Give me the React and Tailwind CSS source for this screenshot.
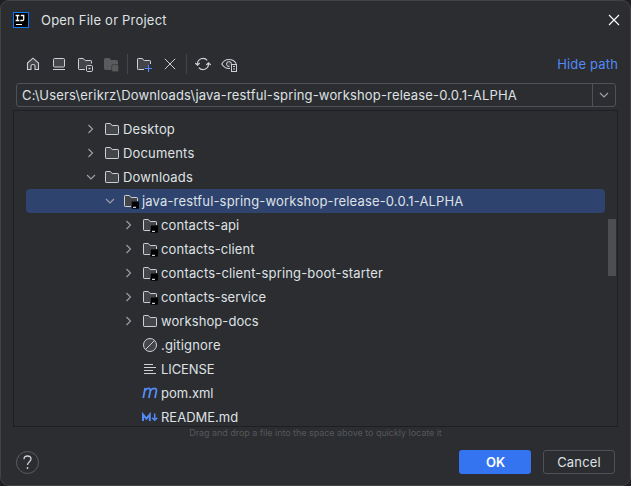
import React from "react";

const FOLDER = "M1.5 3.2Q1.5 2.5 2.2 2.5H6.1L8.3 4.5H13.8Q14.5 4.5 14.5 5.2V12.8Q14.5 13.5 13.8 13.5H2.2Q1.5 13.5 1.5 12.8Z";

function Svg({ children, className = "" }) {
  return (
    <svg width="16" height="16" viewBox="0 0 16 16" fill="none" stroke="#ced0d6" className={"block shrink-0 " + className}>
      {children}
    </svg>
  );
}

const Folder = () => (
  <Svg>
    <path d={FOLDER} fill="#43454a" />
  </Svg>
);

const ModuleFolder = () => (
  <Svg className="overflow-visible">
    <path d="M8 13.5H2.2Q1.5 13.5 1.5 12.8V3.2Q1.5 2.5 2.2 2.5H6.1L8.3 4.5H13.8Q14.5 4.5 14.5 5.2V8" fill="#43454a" />
    <path d="M8 8H14V13H8Z" fill="#43454a" stroke="none" />
    <rect x="8.8" y="8.6" width="7.2" height="7.2" rx="0.8" fill="#000" stroke="none" />
    <path d="M10 14.3H13" stroke="#fff" />
  </Svg>
);

const Ignored = () => (
  <Svg>
    <circle cx="8" cy="8" r="6.5" fill="#43454a" />
    <path d="M3.5 12.5L12.5 3.5" />
  </Svg>
);

const TextFile = () => (
  <Svg>
    <path d="M2 3.5H11M2 6.5H14M2 9.5H11M2 12.5H14" />
  </Svg>
);

const Maven = () => (
  <Svg className="overflow-visible">
    <path
      d="M1.2 13L3.2 3M2.7 6C3.8 4 5.2 3.4 6.4 3.4C8 3.4 8.6 4.5 8.3 6L6.9 13M8.3 6C9.5 4 10.8 3.4 12.2 3.4C14 3.4 14.7 4.5 14.4 6L13 13"
      stroke="#548af7"
      strokeWidth="1.8"
    />
  </Svg>
);

const Markdown = () => (
  <Svg>
    <path d="M1 12V5.5L4.4 9.7L7.8 5.5V12" stroke="#548af7" strokeWidth="2" />
    <path d="M12.7 4.5V11.3M10.1 8.7L12.7 11.3L15.3 8.7" stroke="#548af7" strokeWidth="1.5" />
  </Svg>
);

function Chevron({ open }) {
  return (
    <Svg>
      <path d={open ? "M4 6L8 10L12 6" : "M5.5 4L9.5 8L5.5 12"} stroke="#9da0a8" strokeWidth="1.15" />
    </Svg>
  );
}

const ROWS = [
  { name: "Desktop", icon: Folder, arrow: "closed", pad: "pl-[57px]" },
  { name: "Documents", icon: Folder, arrow: "closed", pad: "pl-[57px]" },
  { name: "Downloads", icon: Folder, arrow: "open", pad: "pl-[57px]" },
  { name: "java-restful-spring-workshop-release-0.0.1-ALPHA", icon: ModuleFolder, arrow: "open", pad: "pl-[76px]", selected: true },
  { name: "contacts-api", icon: ModuleFolder, arrow: "closed", pad: "pl-[95px]", tracking: "tracking-[0.08px]" },
  { name: "contacts-client", icon: ModuleFolder, arrow: "closed", pad: "pl-[95px]", tracking: "tracking-[0.1px]" },
  { name: "contacts-client-spring-boot-starter", icon: ModuleFolder, arrow: "closed", pad: "pl-[95px]" },
  { name: "contacts-service", icon: ModuleFolder, arrow: "closed", pad: "pl-[95px]", tracking: "tracking-[0.08px]" },
  { name: "workshop-docs", icon: Folder, arrow: "closed", pad: "pl-[95px]", tracking: "tracking-[0.08px]" },
  { name: ".gitignore", icon: Ignored, pad: "pl-[95px]" },
  { name: "LICENSE", icon: TextFile, pad: "pl-[95px]", tracking: "tracking-[-0.1px]" },
  { name: "pom.xml", icon: Maven, pad: "pl-[95px]", tracking: "tracking-[0px]" },
  { name: "README.md", icon: Markdown, pad: "pl-[95px]", tracking: "tracking-[0px]" },
];

function Row({ row }) {
  const Icon = row.icon;
  return (
    <div className={"flex h-6 shrink-0 items-center rounded " + row.pad + (row.selected ? " bg-[#2e436e]" : "")}>
      <div className="w-[21px] shrink-0">{row.arrow && <Chevron open={row.arrow === "open"} />}</div>
      <Icon />
      <span className={"ml-[3px] whitespace-nowrap " + (row.tracking || "")}>{row.name}</span>
    </div>
  );
}

function Toolbar() {
  return (
    <div className="flex h-5 items-center">
      <Svg>
        <path d="M2.5 7L8 2.2L13.5 7V13.5H10V10Q10 8.5 8 8.5T6 10V13.5H2.5Z" fill="#43454a" strokeWidth="1.1" />
      </Svg>
      <Svg className="ml-2.5">
        <rect x="2.5" y="2.5" width="11" height="8.5" rx="1" fill="#43454a" />
        <path d="M2 13.5H14" />
      </Svg>
      <Svg className="ml-2.5 overflow-visible">
        <path d="M8 12.5H2.2Q1.5 12.5 1.5 11.8V3.2Q1.5 2.5 2.2 2.5H6.1L8.3 4.5H13.8Q14.5 4.5 14.5 5.2V8L8 12.5" fill="#43454a" stroke="none" />
        <path d="M8 13.5H2.2Q1.5 13.5 1.5 12.8V3.2Q1.5 2.5 2.2 2.5H6.1L8.3 4.5H13.8Q14.5 4.5 14.5 5.2V7.5" />
        <rect x="9.5" y="9.5" width="6" height="6" rx="1.2" fill="#2b2d30" />
        <path d="M11.5 12.5H13.5" strokeWidth="1.6" />
      </Svg>
      <Svg className="ml-2.5 overflow-visible">
        <path d={FOLDER} fill="#5a5b5d" stroke="#5a5b5d" />
        <rect x="8.7" y="8.7" width="7" height="7" rx="1.5" fill="#5a5b5d" stroke="#2b2d30" strokeWidth="0.6" />
      </Svg>
      <div className="ml-2 h-5 w-px bg-[#43454a]" />
      <Svg className="ml-2 overflow-visible">
        <path d="M8.5 13.5H2.2Q1.5 13.5 1.5 12.8V3.2Q1.5 2.5 2.2 2.5H6.1L8.3 4.5H13.8Q14.5 4.5 14.5 5.2V8L8.5 13.5" fill="#43454a" stroke="none" />
        <path d="M8 13.5H2.2Q1.5 13.5 1.5 12.8V3.2Q1.5 2.5 2.2 2.5H6.1L8.3 4.5H13.8Q14.5 4.5 14.5 5.2V8" />
        <path d="M12.5 9V16M9 12.5H16" stroke="#548af7" strokeWidth="1.1" />
      </Svg>
      <Svg className="ml-2.5">
        <path d="M2.8 2.8L13.2 13.2M13.2 2.8L2.8 13.2" />
      </Svg>
      <div className="ml-2 h-5 w-px bg-[#43454a]" />
      <Svg className="ml-2 overflow-visible">
        <path d="M2.5 9V8A5.5 5.5 0 0 1 12.2 4.4M13.5 7V8A5.5 5.5 0 0 1 3.8 11.6M0.3 7L2.5 9.2L4.7 7M11.3 9L13.5 6.8L15.7 9" strokeWidth="1.15" />
      </Svg>
      <Svg className="ml-2.5 overflow-visible">
        <path d="M9 12.4C5 12.8 2.3 10.6 0.8 8C2.3 5.1 4.9 3.5 8 3.5C11.3 3.5 13.8 5.1 15.2 7.7" strokeWidth="1.1" />
        <path d="M8.5 10.5A2.5 2.5 0 1 1 10.5 7.8" fill="#43454a" />
        <rect x="10.5" y="8.5" width="5" height="7" />
        <path d="M12 10.5H14M12 13H14" />
      </Svg>
      <span className="ml-auto mr-[-2px] text-[#548af7]">Hide path</span>
    </div>
  );
}

export default function App() {
  return (
    <div className="h-[486px] w-[631px] overflow-hidden bg-[#1e1f22] font-['Inter',sans-serif] text-[13px] leading-4 tracking-[0.165px] text-[#dfe1e5]">
      <div className="flex h-full flex-col overflow-hidden rounded-[9px] border border-[#434345] bg-[#2b2d30]">
        <div className="flex h-[38px] shrink-0 items-center pl-3 pr-2">
          <svg width="16" height="16" viewBox="0 0 16 16" fill="none" className="block shrink-0">
            <rect x="0.5" y="0.5" width="15" height="15" fill="#000" stroke="#087cfa" />
            <path d="M2.6 3.5H6.4M4.5 3.5V8.5M2.6 8.5H6.4M7.8 3.5H10.7V7.3Q10.7 8.5 9.4 8.5H7.3" stroke="#fff" strokeWidth="1.3" />
            <path d="M3 12.5H9" stroke="#fff" strokeWidth="1.1" />
          </svg>
          <span className="ml-3 tracking-[0.21px]">Open File or Project</span>
          <Svg className="ml-auto">
            <path d="M3 3L13 13M13 3L3 13" stroke="#fff" strokeWidth="1.1" />
          </Svg>
        </div>
        <div className="mt-[15px] shrink-0 pl-6 pr-3.5">
          <Toolbar />
        </div>
        <div className="ml-[15px] mr-3.5 mt-[9px] flex h-6 shrink-0 items-center rounded-[3px] border border-[#4e5157]">
          <span className="flex-1 whitespace-nowrap pl-[5px]">C:\Users\erikrz\Downloads\java-restful-spring-workshop-release-0.0.1-ALPHA</span>
          <div className="flex h-full w-[23px] items-center justify-center border-l border-[#4e5157]">
            <Chevron open />
          </div>
        </div>
        <div className="ml-3 mr-3 mt-[3px] flex h-[317px] shrink-0 overflow-hidden border border-[#1e1f22]">
          <div className="ml-3 mt-1.5 flex w-[579px] flex-col">
            {ROWS.map((row) => (
              <Row key={row.name} row={row} />
            ))}
          </div>
          <div className="ml-[3px] mt-[108px] h-[57px] w-2 bg-[#4d4e51]" />
        </div>
        <div className="h-3 shrink-0 text-center text-[9px] leading-3 tracking-[-0.04px] text-[#55575b]">
          Drag and drop a file into the space above to quickly locate it
        </div>
        <div className="mt-[11px] flex h-6 shrink-0 items-center pl-[15px] pr-[15px]">
          <svg width="24" height="24" viewBox="0 0 24 24" fill="none" className="block">
            <circle cx="11.5" cy="12.5" r="11" stroke="#5a5d63" />
            <path d="M8 9.2C8 7.2 9.5 6 11.5 6S15 7.2 15 9C15 11.6 11.5 11.8 11.5 15" stroke="#ced0d6" strokeWidth="1.3" />
            <circle cx="11.5" cy="18" r="0.9" fill="#ced0d6" />
          </svg>
          <button className="ml-auto h-6 w-[72px] rounded-[3px] bg-[#3574f0] pl-px font-semibold tracking-normal text-white">OK</button>
          <button className="ml-3 h-6 w-[72px] rounded-[3px] border border-[#4e5157]">Cancel</button>
        </div>
      </div>
    </div>
  );
}
